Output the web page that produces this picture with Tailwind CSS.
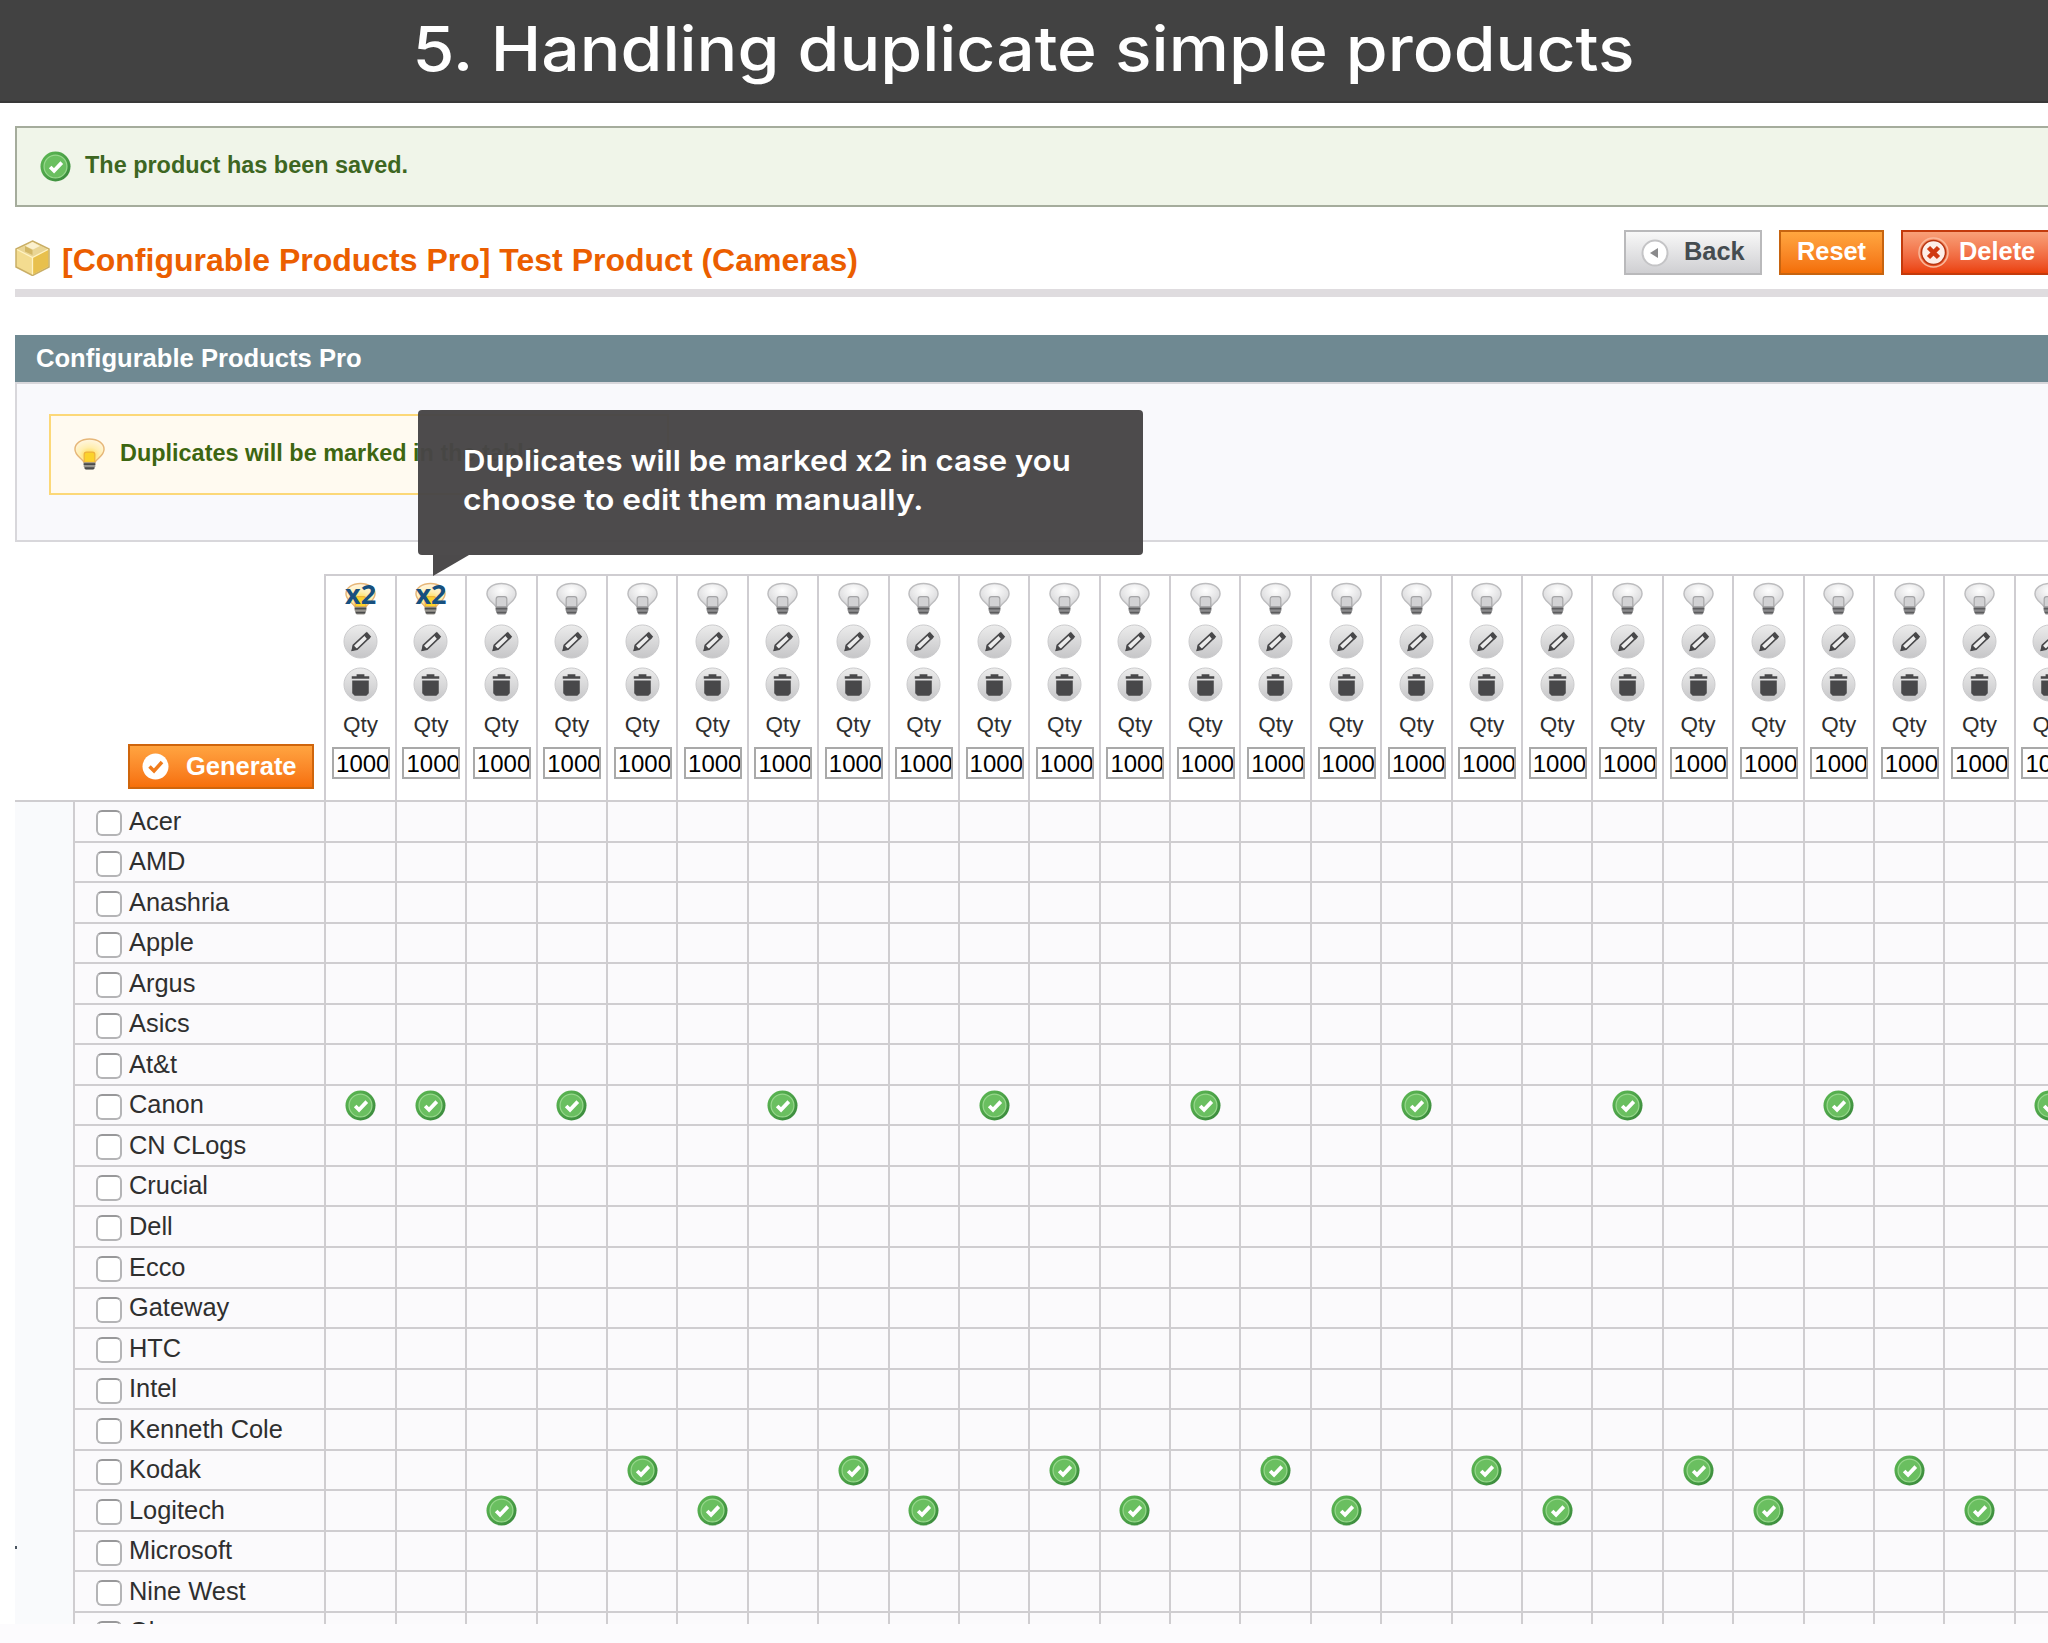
<!DOCTYPE html>
<html lang="en">
<head>
    <meta charset="UTF-8">
    <meta name="viewport" content="width=device-width, initial-scale=1.0">
    <title>Configurable Products Pro</title>
    <script src="https://cdn.jsdelivr.net/npm/@tailwindcss/browser@4"></script>
</head>
<body class="bg-[#fcfbfd] font-['Liberation_Sans',Arial,sans-serif] text-[#2f2f2f]">
    <!-- icon sprites -->
    <svg class="absolute w-0 h-0">
        <defs>
            <linearGradient id="grey" x1="0" y1="0" x2="0" y2="1"><stop offset="0" stop-color="#ececec"/><stop offset="1" stop-color="#c6c6c8"/></linearGradient>
            <linearGradient id="green" x1="0" y1="0" x2="1" y2="1"><stop offset="0" stop-color="#5fbb55"/><stop offset="1" stop-color="#37863a"/></linearGradient>
            <radialGradient id="glass" cx=".5" cy=".3" r=".7"><stop offset="0" stop-color="#ffffff"/><stop offset="1" stop-color="#d4d4d6"/></radialGradient>
            <radialGradient id="glow" cx=".5" cy=".7" r=".7"><stop offset="0" stop-color="#ffd83a"/><stop offset=".5" stop-color="#ffeeb0"/><stop offset="1" stop-color="#fff6e4"/></radialGradient>
        </defs>
        <symbol id="check" viewBox="0 0 32 32">
            <circle cx="16" cy="16" r="15.5" fill="url(#green)"/>
            <circle cx="16" cy="16" r="11.8" fill="#6abf60" stroke="#97d78c" stroke-width="1.3"/>
            <path d="M10.5 16.5l4 4 8-8.5" fill="none" stroke="#fff" stroke-width="3.8"/>
        </symbol>
        <symbol id="bulb" viewBox="0 0 32 34">
            <path d="M10.5 25C7 20 1 18 1 11.500C1 5.500 7.500 1 16 1s15 4.500 15 10.500c0 6.500-6 8.500-9.500 13.500z" fill="url(#glass)" stroke="#bdbdbf" stroke-width="1.500"/>
            <path d="M10.500 25v-8q0-2.500 2.500-2.500h6q2.500 0 2.500 2.500v8z" fill="#d2d2d4" stroke="#a5a5a7" stroke-width="1.200"/>
            <path d="M10 25h12v4l-2 4h-8l-2-4z" fill="#8c8c8e"/>
            <path d="M10 27h12M11 31h10" stroke="#5c5c5e" stroke-width="1.500"/>
        </symbol>
        <symbol id="bulb-on" viewBox="0 0 32 34">
            <path d="M10.500 25C7 20 1 18 1 11.500C1 5.500 7.500 1 16 1s15 4.500 15 10.500c0 6.500-6 8.500-9.500 13.500z" fill="url(#glow)" stroke="#e6b678" stroke-width="1.500"/>
            <path d="M10.500 25v-8q0-2.500 2.500-2.500h6q2.500 0 2.500 2.500v8z" fill="#fbd22c" stroke="#eeb03c" stroke-width="1.200"/>
            <path d="M10 25h12v4l-2 4h-8l-2-4z" fill="#99968f"/>
            <path d="M10 27h12M11 31h10" stroke="#4a4a4a" stroke-width="1.700"/>
        </symbol>
        <symbol id="pencil" viewBox="0 0 36 36">
            <circle cx="18" cy="18" r="17" fill="url(#grey)" stroke="#c9c9cb"/>
            <path d="M11 21.500L23.500 10l3.500 4L14.500 26l-5 1z" fill="#ececec" stroke="#48484a" stroke-width="1.600"/>
            <path d="M21.500 11.500L24.500 8l4.500 5-3.500 3.500zM9 27.500l1-6.500 5 5z" fill="#48484a"/>
        </symbol>
        <symbol id="trash" viewBox="0 0 36 36">
            <circle cx="18" cy="18" r="17" fill="url(#grey)" stroke="#c9c9cb"/>
            <path d="M9 9.500h5V7.500h8v2h5v2.500H9zM9.500 14h17v13l-2.500 2.500H12L9.500 27z" fill="#48484a"/>
        </symbol>
    </svg>

    <header class="h-[103px] bg-[#424242] border-b-2 border-[#383838] flex justify-center pt-[8px]">
        <h1 class="font-[Inter,sans-serif] font-medium text-[62px] leading-[82px] scale-x-[1.094] text-white whitespace-nowrap">5. Handling duplicate simple products</h1>
    </header>

    <main class="h-[1521px] overflow-hidden bg-white pl-[15px] pt-[23px]">
        <div class="h-[81px] border-2 border-r-0 border-[#a5ac9c] bg-[#f0f5e9] flex items-center pl-[23px]">
            <svg class="w-[31px] h-[31px]"><use href="#check"/></svg>
            <p class="pl-[14px] font-bold text-[23.450px] leading-[30px] text-[#3d6621] whitespace-nowrap -mt-[3px]">The product has been saved.</p>
        </div>

        <div class="h-[90px] border-b-[8px] border-[#dfdcdf] flex pt-[23px]">
            <svg class="w-[35px] h-[36px] mt-[10px]" viewBox="0 0 35 36">
                <path d="M17.500 1L34 9v18L17.500 35.500L1 27V9z" fill="#f3dc90" stroke="#c9ae66" stroke-width="1.500"/>
                <path d="M17.500 2L33 9.500l-15.500 8L2 9.500z" fill="#e9d595"/>
                <path d="M17.500 17.500L33 9.500v17L17.500 34.500z" fill="#e8c04d"/>
                <path d="M17.500 2L25 6l-7 3.500L10 6z" fill="#fbf1cf"/>
                <path d="M10 6l7.500 4v5L10 11.500z" fill="#d3b765"/>
                <path d="M17.500 17.500v17M2 9.500l15.500 8 15.500-8" fill="none" stroke="#fff3c4" stroke-width="1.300"/>
            </svg>
            <h2 class="ml-[12px] mt-[12px] font-bold text-[32px] leading-[36px] text-[#eb5e00] whitespace-nowrap">[Configurable Products Pro] Test Product (Cameras)</h2>
            <div class="ml-auto w-[424px] flex gap-[17px] font-bold text-[25.400px] leading-[40px] shrink-0 overflow-hidden">
                <button class="w-[138px] h-[45px] border-2 border-[#b9b9bb] bg-linear-to-b from-[#f8f8f8] to-[#cfcfd2] text-[#454c50] flex shrink-0 items-center pl-[15px]">
                    <svg class="w-[28px] h-[28px] mr-[15px]" viewBox="0 0 28 28"><circle cx="14" cy="14" r="12.500" fill="#fff" stroke="#c4c4c6" stroke-width="2"/><path d="M9 14l8-5v10z" fill="#8a8a8c"/></svg>
                    <span class="-mt-[3px]">Back</span>
                </button>
                <button class="w-[105px] h-[45px] border-2 border-[#c76410] bg-linear-to-b from-[#ffa63f] to-[#f36e05] text-white flex shrink-0 items-center justify-center"><span class="-mt-[3px]">Reset</span></button>
                <button class="w-[160px] h-[45px] border-2 border-[#c33a0c] bg-linear-to-b from-[#f8a078] to-[#ea3f05] text-white flex shrink-0 items-center pl-[15px]">
                    <svg class="w-[31px] h-[31px] mr-[10px]" viewBox="0 0 31 31"><circle cx="15.500" cy="15.500" r="14.500" fill="none" stroke="#f9b99c" stroke-width="1.500"/><circle cx="15.500" cy="15.500" r="12" fill="#fdeee8" stroke="#b73511" stroke-width="1.500"/><path d="M10.500 10.500l10 10M20.500 10.500l-10 10" stroke="#d03a12" stroke-width="4.500"/></svg>
                    <span class="-mt-[3px]">Delete</span>
                </button>
            </div>
        </div>

        <section class="mt-[38px] h-[207px] relative">
            <h3 class="h-[47px] bg-[#6f8992] pl-[21px] pt-[4px] font-bold text-[25.600px] leading-[38px] text-white whitespace-nowrap">Configurable Products Pro</h3>
            <div class="h-[160px] border-2 border-r-0 border-[#d8d7db] bg-[#f9f9fc] pl-[32px] pt-[30px]">
                <div class="w-[620px] h-[81px] border-2 border-[#fcd878] bg-[#fffaf0] flex pl-[23px] pt-[21px]">
                    <svg class="w-[31px] h-[35px]"><use href="#bulb-on"/></svg>
                    <p class="pl-[15px] font-bold text-[23.450px] leading-[33px] text-[#3d6611] whitespace-nowrap">Duplicates will be marked in the table</p>
                </div>
            </div>

            <!-- callout -->
            <div class="absolute left-[403px] top-[75px] w-[725px] h-[145px] rounded-[4px] bg-[#474546]/97 pl-[45px] pt-[32px] font-[Inter,sans-serif] font-semibold text-[29px] leading-[38.500px] text-white whitespace-nowrap">
                <p class="origin-left scale-x-[1.072]">Duplicates will be marked x2 in case you</p>
                <p class="origin-left scale-x-[1.097]">choose to edit them manually.</p>
                <svg class="absolute left-[15px] top-full w-[36px] h-[21px]" viewBox="0 0 36 21"><path d="M0 0h36L0 21z" fill="#4c4a4b"/></svg>
            </div>
        </section>

        <!-- matrix header -->
        <div class="mt-[32px] h-[226px] flex">
            <div class="w-[309.400px] shrink-0 pt-[170px] pl-[113px]">
                <button class="w-[186px] h-[45px] border-2 border-[#cf650c] bg-linear-to-b from-[#ffa440] to-[#f66f08] text-white font-bold text-[25.500px] leading-[40px] flex items-center pl-[12px]">
                    <svg class="w-[27px] h-[27px] mr-[17px]" viewBox="0 0 27 27"><circle cx="13.500" cy="13.500" r="13" fill="#fff"/><path d="M7.500 13.500l4.500 4.500 8-9" fill="none" stroke="#f07c1c" stroke-width="3.500"/></svg>
                    <span class="-mt-[2px]">Generate</span>
                </button>
            </div>
            <div id="head" class="w-[1759.75px] shrink-0 border-t-2 border-[#cfcdd1] grid grid-cols-[repeat(25,70.400px)]"></div>
        </div>

        <!-- matrix rows -->
        <div id="rows" class="w-[2070px] relative border-t-2 border-[#cfcdd0] bg-[#f9fafc] pl-[58px]">
            <span class="absolute left-0 top-[744px] w-[2px] h-[3px] bg-[#4a5560]"></span>
        </div>
    </main>

    <script>
        const brands = ['Acer', 'AMD', 'Anashria', 'Apple', 'Argus', 'Asics', 'At&t', 'Canon', 'CN CLogs', 'Crucial', 'Dell', 'Ecco', 'Gateway', 'HTC', 'Intel', 'Kenneth Cole', 'Kodak', 'Logitech', 'Microsoft', 'Nine West', 'Olympus'];
        const checked = {
            Canon: [0, 1, 3, 6, 9, 12, 15, 18, 21, 24],
            Kodak: [4, 7, 10, 13, 16, 19, 22],
            Logitech: [2, 5, 8, 11, 14, 17, 20, 23]
        };

        let head = '';
        for (let i = 0; i < 25; i++) {
            const bulb = i < 2
                ? `<div class="relative"><svg class="w-[31px] h-[34px]"><use href="#bulb-on"/></svg><b class="absolute left-0 top-[-1px] font-['Open_Sans',sans-serif] font-bold text-[27px] leading-[26px] text-[#17507f]">x2</b></div>`
                : `<svg class="w-[31px] h-[34px]"><use href="#bulb"/></svg>`;
            head += `
                <div class="border-l-2 border-[#cfcdd1] flex flex-col items-center pt-[6px]">
                    ${bulb}
                    <svg class="w-[35px] h-[35px] mt-[8px]"><use href="#pencil"/></svg>
                    <svg class="w-[35px] h-[35px] mt-[8px]"><use href="#trash"/></svg>
                    <div class="mt-[8px] text-[22.500px] leading-[29px]">Qty</div>
                    <div class="ml-[1px] mt-[8px] w-[58px] h-[32px] border-2 border-[#a9a9a9] bg-white overflow-hidden pl-[2px] text-[24px] leading-[29px] text-black">1000</div>
                </div>`;
        }
        document.getElementById('head').innerHTML = head;

        let rows = '';
        brands.forEach(brand => {
            let cells = '';
            for (let i = 0; i < 25; i++) {
                const on = (checked[brand] || []).includes(i);
                cells += `<div class="border-l-2 border-[#cfcdd0] flex items-center justify-center">${on ? '<svg class="w-[31px] h-[31px]"><use href="#check"/></svg>' : ''}</div>`;
            }
            rows += `
                <div class="h-[40.550px] border-b-2 border-l-2 border-[#cfcdd0] bg-[#fbfafc] grid grid-cols-[249.400px_repeat(25,70.400px)]">
                    <div class="flex items-start pl-[21px]">
                        <span class="w-[26px] h-[26px] mt-[8px] rounded-[6px] border-2 border-[#b4b4b6] border-t-[#98989a] bg-white"></span>
                        <span class="pl-[7px] pt-[4.500px] text-[25.400px] leading-[28px] whitespace-nowrap">${brand.replace('&', '&amp;')}</span>
                    </div>
                    ${cells}
                </div>`;
        });
        document.getElementById('rows').insertAdjacentHTML('beforeend', rows);
    </script>
</body>
</html>
